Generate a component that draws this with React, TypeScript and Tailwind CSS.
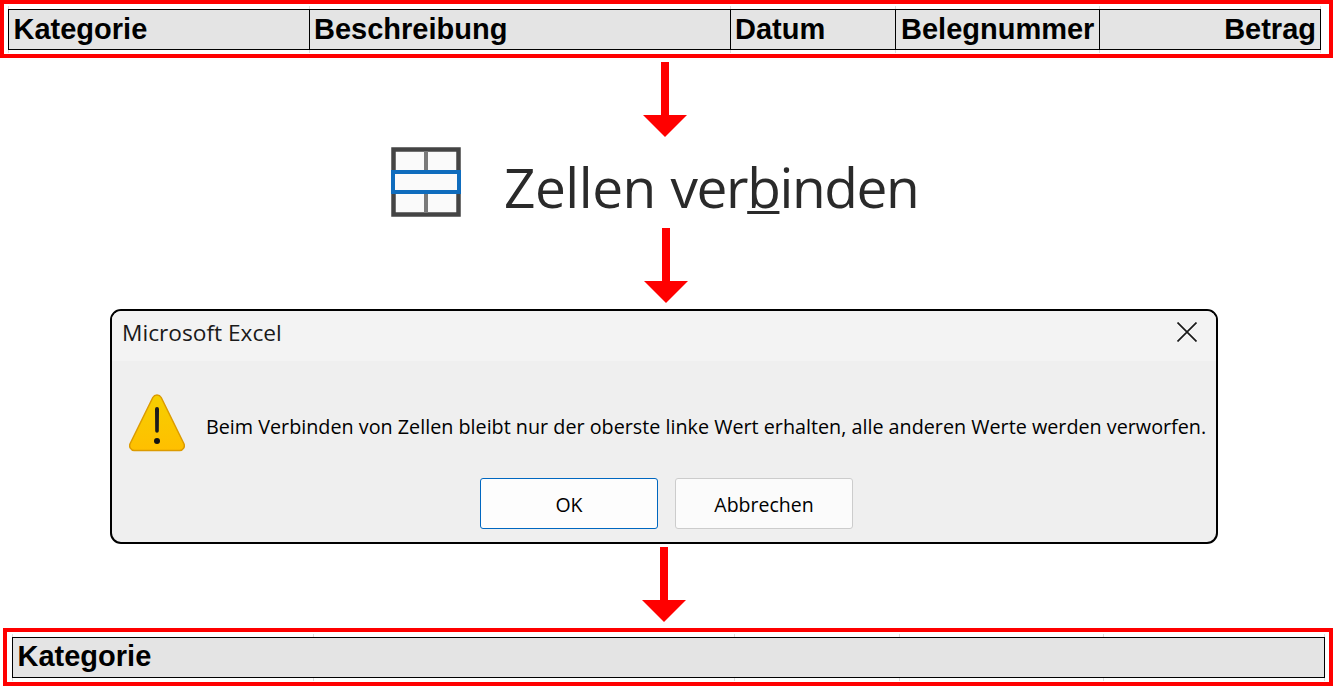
const cols = [
  { label: "Kategorie", w: "w-[301px]", pad: "pl-[4.5px] pr-1" },
  { label: "Beschreibung", w: "w-[421px]", pad: "pl-1 pr-1" },
  { label: "Datum", w: "w-[165px]", pad: "pl-1 pr-1" },
  { label: "Belegnummer", w: "w-[204px]", pad: "pl-[5px] pr-1" },
  { label: "Betrag", w: "w-[221px]", pad: "pl-1 pr-1 text-right" },
]

function Ticks() {
  return (
    <div className="flex h-[3px]">
      {cols.map((c) => (
        <div key={c.label} className={c.w + " border-l border-[#dddddd]"} />
      ))}
      <div className="w-px bg-[#dddddd]" />
    </div>
  )
}

function Arrow({ className }: { className: string }) {
  return (
    <div className={"flex h-[75px] " + className}>
      <svg width="44" height="75" viewBox="0 0 44 75">
        <path d="M18 0h8v53h18L22 75 0 53h18z" fill="#ff0000" />
      </svg>
    </div>
  )
}

function MergeIcon() {
  return (
    <svg width="70" height="70" viewBox="0 0 70 70" className="blur-[0.7px] shrink-0">
      <rect x="2.500" y="2.500" width="65" height="65" fill="#fafafa" stroke="#444444" strokeWidth="4.500" />
      <path d="M35 4v20M35 46v20" stroke="#7a7a7a" strokeWidth="4" />
      <rect x="2" y="25" width="66" height="20" fill="#fafafa" stroke="#0f6cbd" strokeWidth="4" />
    </svg>
  )
}

function WarningIcon() {
  return (
    <svg width="56" height="58" viewBox="0 0 56 58" className="shrink-0">
      <defs>
        <linearGradient id="warn" x1="0" y1="0" x2="0" y2="1">
          <stop offset="0" stopColor="#f6cf00" />
          <stop offset="1" stopColor="#ffbf00" />
        </linearGradient>
      </defs>
      <path
        d="M23.800 3.500c1.900-3.300 6.500-3.300 8.400 0l22.600 46c1.500 3.200-.6 7-4 7H5.200c-3.400 0-5.500-3.800-4-7z"
        fill="url(#warn)"
        stroke="#dc9b00"
        strokeWidth="1.500"
      />
      <path d="M26 15a2 2 0 0 1 4 0l-.2 22a1.800 1.800 0 0 1-3.600 0z" fill="#1c1c1c" />
      <circle cx="28" cy="47" r="3" fill="#111111" />
    </svg>
  )
}

export default function App() {
  return (
    <div className="w-[1333px] h-[686px] bg-white overflow-hidden font-['Liberation_Sans',Arial,sans-serif] text-black">
      {/* top table */}
      <div className="h-[58px] border-4 border-[#ff0000] pt-[2px] pl-1">
        <Ticks />
        <div className="flex h-[41px] w-[1313px] border border-black bg-[#e4e4e4] text-[29px] font-bold leading-[38px]">
          {cols.map((c, i) => (
            <div
              key={c.label}
              className={
                (i === 0 ? "w-[300px]" : c.w) +
                (i > 0 ? " border-l border-black " : " ") +
                c.pad +
                " whitespace-nowrap"
              }
            >
              {c.label}
            </div>
          ))}
        </div>
        <Ticks />
      </div>

      <Arrow className="mt-1 ml-[643px]" />

      {/* ribbon button, blown up */}
      <div className="flex h-[91px] ml-[391px] items-start">
        <div className="pt-[10px]">
          <MergeIcon />
        </div>
        <div className="ml-[43px] mt-[10px] font-['Open_Sans',sans-serif] text-[55px] leading-[80px] text-[#2a2a2a] blur-[0.7px] whitespace-nowrap tracking-[-0.5px]">
          Zellen{" "}
          <span className="ml-[1px] tracking-[-1.4px]">
            ver<span className="underline decoration-[3px] underline-offset-[3px]">b</span>inden
          </span>
        </div>
      </div>

      <Arrow className="ml-[644px]" />

      {/* dialog */}
      <div className="mt-[6px] ml-[110px] w-[1108px] h-[235px] rounded-[11px] border-2 border-black bg-[#efefef] overflow-hidden font-['Open_Sans',sans-serif]">
        <div className="flex h-[50px] items-start justify-between bg-[#f3f3f3] pl-[10px] pr-[19px]">
          <span className="mt-[5px] text-[22.7px] leading-[34px] text-[#1a1a1a]">Microsoft Excel</span>
          <svg width="20" height="20" viewBox="0 0 20 20" className="mt-[11px]">
            <path d="M0.5 0.5l19 19M19.500 0.5l-19 19" stroke="#1a1a1a" strokeWidth="1.700" fill="none" />
          </svg>
        </div>
        <div className="flex items-center pl-[17px] pt-[33px]">
          <WarningIcon />
          <span className="relative top-[4px] ml-[21px] text-[19.75px] whitespace-nowrap">
            Beim Verbinden von Zellen bleibt nur der oberste linke Wert erhalten, alle anderen Werte werden verworfen.
          </span>
        </div>
        <div className="flex gap-[17px] pl-[368px] pt-[26px] text-[19.5px]">
          <button className="h-[51px] w-[178px] rounded-[3px] border border-[#0067c0] bg-[#fdfdfd] pt-[2px]">OK</button>
          <button className="h-[51px] w-[178px] rounded-[3px] border border-[#cccccc] bg-[#fbfbfb] pt-[2px]">Abbrechen</button>
        </div>
      </div>

      <Arrow className="mt-[3px] ml-[642px]" />

      {/* merged result */}
      <div className="mt-[6px] ml-[3px] h-[58px] w-[1330px] border-4 border-[#ff0000] pt-[2px] pl-[5px]">
        <Ticks />
        <div className="h-[41px] w-[1313px] border border-black bg-[#e4e4e4] pl-[4.5px] text-[29px] font-bold leading-[37px]">
          Kategorie
        </div>
        <Ticks />
      </div>
    </div>
  )
}
